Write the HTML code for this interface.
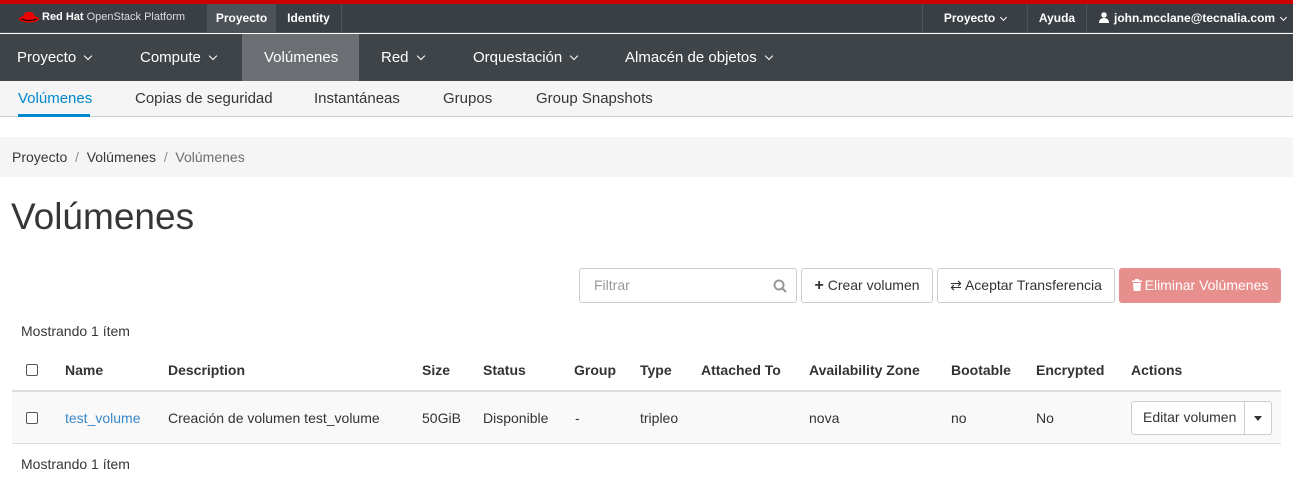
<!DOCTYPE html>
<html><head><meta charset="utf-8"><style>
*{margin:0;padding:0;box-sizing:border-box}
body{width:1293px;height:483px;overflow:hidden;background:#fff;font-family:"Liberation Sans",Arial,sans-serif;color:#363636;position:relative}
.a{position:absolute;white-space:nowrap}
.chev{display:inline-block;width:6px;height:6px;border-right:1.5px solid currentColor;border-bottom:1.5px solid currentColor;transform:rotate(45deg);margin-left:9px;position:relative;top:-3px}
.sm .chev{width:5px;height:5px;margin-left:6px;top:-2px}
.btn{position:absolute;top:268px;height:35px;border:1px solid #ccc;border-radius:3px;background:#fff;font-size:14px;line-height:33px;text-align:center;color:#333}
.hd{font-size:14px;font-weight:bold;color:#333;top:362px}
.rw{font-size:14px;color:#333;top:410px}
.cb{position:absolute;width:12px;height:12px;border:1px solid #555;border-radius:2px;background:#fff}
.tb{font-weight:bold}
</style></head><body>
<div class="a" style="left:0;top:0;width:1293px;height:4px;background:#c00"></div>
<div class="a" style="left:0;top:4px;width:1293px;height:29px;background:#393f44;border-bottom:1px solid #4d5258"></div>
<svg class="a" style="left:18px;top:10px" width="22" height="14" viewBox="0 0 22 14"><ellipse cx="11" cy="9" rx="10" ry="3.5" fill="#e00"/><path d="M5 8 Q6 1 11 2 Q16 1 17 8 Z" fill="#e00"/><path d="M3 9 Q11 12 19 9" stroke="#000" stroke-width="1" fill="none"/></svg>
<div class="a" style="left:42px;top:11px;font-size:11px;color:#ddd"><b style="color:#fff">Red Hat</b> OpenStack Platform</div>
<div class="a tb" style="left:207px;top:4px;width:69px;height:29px;background:#4d5258;color:#fff;font-size:12px;line-height:29px;text-align:center">Proyecto</div>
<div class="a tb" style="left:276px;top:4px;width:66px;height:29px;border-right:1px solid #4d5258;color:#fff;font-size:12px;line-height:29px;text-align:center">Identity</div>
<div class="a sm tb" style="left:922px;top:4px;width:106px;height:29px;border-left:1px solid #4d5258;border-right:1px solid #4d5258;color:#fff;font-size:12px;line-height:29px;text-align:center">Proyecto<span class="chev"></span></div>
<div class="a tb" style="left:1028px;top:4px;width:59px;height:29px;border-right:1px solid #4d5258;color:#fff;font-size:12px;line-height:29px;text-align:center">Ayuda</div>
<div class="a sm tb" style="left:1099px;top:4px;height:29px;color:#fff;font-size:12px;line-height:29px"><svg width="10" height="11" viewBox="0 0 10 11" style="vertical-align:-1px;margin-right:5px"><circle cx="5" cy="3" r="2.7" fill="#fff"/><path d="M0 11 Q0 6 5 6 Q10 6 10 11Z" fill="#fff"/></svg>john.mcclane@tecnalia.com<span class="chev"></span></div>
<div class="a" style="left:0;top:34px;width:1293px;height:47px;background:#3f4448"></div>
<div class="a" style="left:242px;top:34px;width:117px;height:47px;background:#6b6e72"></div>
<div class="a" style="left:17px;top:49px;font-size:15px;color:#fff">Proyecto<span class="chev"></span></div>
<div class="a" style="left:140px;top:49px;font-size:15px;color:#fff">Compute<span class="chev"></span></div>
<div class="a" style="left:264px;top:49px;font-size:15px;color:#fff">Volúmenes</div>
<div class="a" style="left:381px;top:49px;font-size:15px;color:#fff">Red<span class="chev"></span></div>
<div class="a" style="left:473px;top:49px;font-size:15px;color:#fff">Orquestación<span class="chev"></span></div>
<div class="a" style="left:625px;top:49px;font-size:15px;color:#fff">Almacén de objetos<span class="chev"></span></div>
<div class="a" style="left:0;top:81px;width:1293px;height:36px;background:#f5f5f5;border-bottom:1px solid #ccc"></div>
<div class="a" style="left:18px;top:114px;width:72px;height:3px;background:#0088ce"></div>
<div class="a" style="left:18px;top:90px;font-size:15px;color:#0088ce">Volúmenes</div>
<div class="a" style="left:135px;top:90px;font-size:15px;color:#363636">Copias de seguridad</div>
<div class="a" style="left:314px;top:90px;font-size:15px;color:#363636">Instantáneas</div>
<div class="a" style="left:443px;top:90px;font-size:15px;color:#363636">Grupos</div>
<div class="a" style="left:536px;top:90px;font-size:15px;color:#363636">Group Snapshots</div>
<div class="a" style="left:0;top:137px;width:1293px;height:40px;background:#f5f5f5"></div>
<div class="a" style="left:12px;top:149px;font-size:14px;color:#363636">Proyecto&nbsp; <span style="color:#8b8d8f">/</span>&nbsp; Volúmenes&nbsp; <span style="color:#8b8d8f">/</span>&nbsp; <span style="color:#6b6e72">Volúmenes</span></div>
<div class="a" style="left:11px;top:196px;font-size:37px;color:#363636">Volúmenes</div>
<div class="btn" style="left:579px;width:218px;text-align:left;padding-left:14px;color:#999">Filtrar<svg style="position:absolute;right:9px;top:10px" width="14" height="14" viewBox="0 0 14 14"><circle cx="6" cy="6" r="4.5" stroke="#999" stroke-width="2" fill="none"/><path d="M9.5 9.5 L13 13" stroke="#999" stroke-width="2.2"/></svg></div>
<div class="btn" style="left:801px;width:132px"><b style="font-size:16px">+</b> Crear volumen</div>
<div class="btn" style="left:937px;width:178px">⇄ Aceptar Transferencia</div>
<div class="btn" style="left:1119px;width:162px;background:#e78f8c;border-color:#e78f8c;color:#fff"><svg width="10" height="12" viewBox="0 0 10 12" style="vertical-align:-1px;margin-right:3px"><rect x="0" y="1.5" width="10" height="1.5" fill="#fff"/><rect x="3" y="0" width="4" height="2" fill="#fff"/><path d="M1 4 H9 L8.3 12 H1.7Z" fill="#fff"/></svg>Eliminar Volúmenes</div>
<div class="a" style="left:21px;top:323px;font-size:14px">Mostrando 1 ítem</div>
<div class="cb" style="left:26px;top:364px"></div>
<div class="a hd" style="left:65px">Name</div>
<div class="a hd" style="left:168px">Description</div>
<div class="a hd" style="left:422px">Size</div>
<div class="a hd" style="left:483px">Status</div>
<div class="a hd" style="left:574px">Group</div>
<div class="a hd" style="left:640px">Type</div>
<div class="a hd" style="left:701px">Attached To</div>
<div class="a hd" style="left:809px">Availability Zone</div>
<div class="a hd" style="left:951px">Bootable</div>
<div class="a hd" style="left:1036px">Encrypted</div>
<div class="a hd" style="left:1131px">Actions</div>
<div class="a" style="left:12px;top:390px;width:1269px;height:2px;background:#ddd"></div>
<div class="a" style="left:12px;top:392px;width:1269px;height:52px;background:#f9f9f9;border-bottom:1px solid #ddd"></div>
<div class="cb" style="left:26px;top:412px"></div>
<div class="a rw" style="left:65px;color:#3a87c8">test_volume</div>
<div class="a rw" style="left:168px">Creación de volumen test_volume</div>
<div class="a rw" style="left:422px">50GiB</div>
<div class="a rw" style="left:483px">Disponible</div>
<div class="a rw" style="left:575px">-</div>
<div class="a rw" style="left:640px">tripleo</div>
<div class="a rw" style="left:809px">nova</div>
<div class="a rw" style="left:951px">no</div>
<div class="a rw" style="left:1036px">No</div>
<div class="a" style="left:1131px;top:401px;width:141px;height:34px;border:1px solid #ccc;border-radius:3px;background:#fff"></div>
<div class="a" style="left:1244px;top:401px;width:1px;height:34px;background:#ccc"></div>
<div class="a" style="left:1143px;top:409px;font-size:14px;color:#333">Editar volumen</div>
<div class="a" style="left:1254px;top:416px;width:0;height:0;border-left:4px solid transparent;border-right:4px solid transparent;border-top:5px solid #333"></div>
<div class="a" style="left:21px;top:456px;font-size:14px">Mostrando 1 ítem</div>
</body></html>
